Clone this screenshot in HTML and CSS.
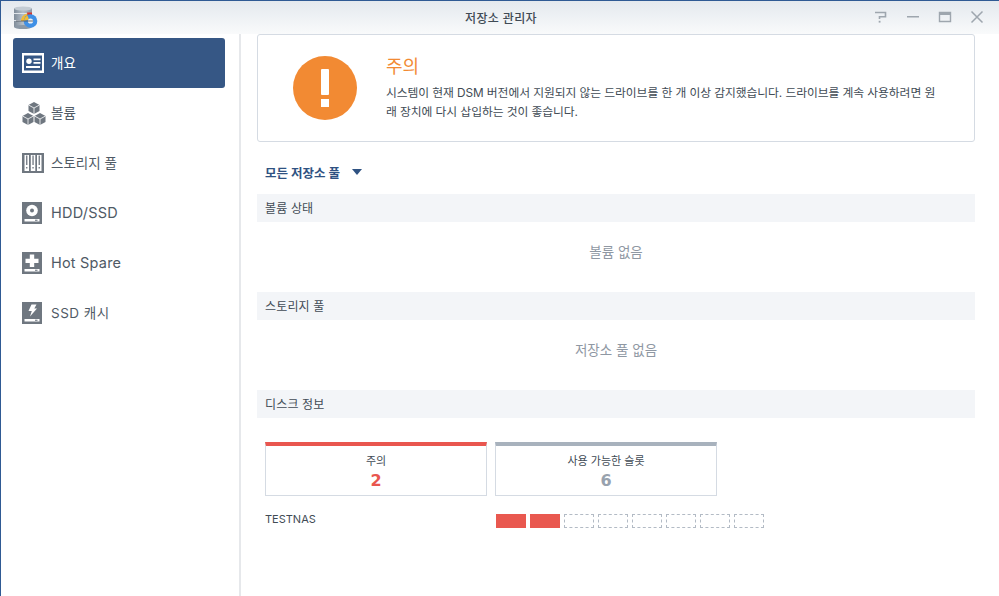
FILE: index.html
```html
<!DOCTYPE html>
<html lang="ko">
<head>
<meta charset="utf-8">
<title>저장소 관리자</title>
<link rel="stylesheet" href="styles.css">
</head>
<body>
<div class="window">
  <header class="titlebar">
    <svg class="app-icon" width="28" height="28" viewBox="0 0 28 28">
      <defs><linearGradient id="cyl" x1="0" x2="1" y1="0" y2="0"><stop offset="0" stop-color="#7f8c99"/><stop offset=".5" stop-color="#b4bec8"/><stop offset="1" stop-color="#8b98a6"/></linearGradient></defs>
      <rect x="1" y="3" width="18" height="19" fill="url(#cyl)"/>
      <ellipse cx="10" cy="3.500" rx="9" ry="2" fill="#c4ccd4"/>
      <ellipse cx="10" cy="22" rx="9" ry="2" fill="#8b98a6"/>
      <path d="M1 8.500h18M1 15.500h18" stroke="#dfe4e9" stroke-width="1"/>
      <path d="M8 16a7.500 7.500 0 0 1 6-7.500l1 7.500z" fill="#f2bb35"/>
      <path d="M14 7.500l5 0 0 5-4 1z" fill="#d7342b"/>
      <circle cx="17.500" cy="16" r="6.800" fill="#3f90e6"/>
      <path d="M11 16a6.500 6.500 0 0 1 3.500-5.500l1.500 4z" fill="#f2bb35"/>
      <circle cx="17.500" cy="16" r="2.600" fill="#eef2f6"/>
      <path d="M3 16h17" stroke="#555c64" stroke-width=".9"/>
    </svg>
    <h1 class="title">저장소 관리자</h1>
    <div class="controls">
      <svg width="14" height="14" viewBox="0 0 14 14"><path d="M1 2.500h10.500v4.200h-6v2.300" fill="none" stroke="#9ea6ae" stroke-width="1.600"/><rect x="4.700" y="10.800" width="1.800" height="1.800" fill="#9ea6ae"/></svg>
      <svg width="14" height="14" viewBox="0 0 14 14"><rect x="1" y="6" width="12" height="1.500" fill="#9ea6ae"/></svg>
      <svg width="14" height="14" viewBox="0 0 14 14"><path d="M1.500 2.500h11v9h-11z" fill="none" stroke="#9ea6ae" stroke-width="1.400"/><rect x="1" y="2" width="12" height="3" fill="#9ea6ae"/></svg>
      <svg width="14" height="14" viewBox="0 0 14 14"><path d="M1.500 1.500l11 11M12.500 1.500l-11 11" stroke="#9ea6ae" stroke-width="1.500"/></svg>
    </div>
  </header>
  <div class="body">
    <nav class="sidebar">
      <a class="nav-item active">
        <svg class="nav-icon" width="22" height="20" viewBox="0 0 22 20"><path fill-rule="evenodd" d="M0 0h22v20H0zM2 2.500v15h18v-15z" fill="#fff"/><circle cx="7" cy="8.200" r="2.700" fill="#fff"/><rect x="4" y="13" width="14" height="2" fill="#fff"/><path d="M11.500 5.500h7v1.800h-7zM11.500 9h7v1.800h-7z" fill="#fff"/></svg>
        <span>개요</span>
      </a>
      <a class="nav-item">
        <svg class="nav-icon" width="24" height="24" viewBox="0 0 24 24"><path d="M12 1l5.500 3v6L12 13l-5.500-3V4z" fill="#6f7780"/><path d="M6 12l5.500 3v6L6 24l-5.500-3v-6z" fill="#6f7780"/><path d="M18 12l5.500 3v6L18 24l-5.500-3v-6z" fill="#6f7780"/><path d="M6.500 4L12 7l5.500-3M12 7v6M.5 15L6 18l5.500-3M6 18v6M12.500 15l5.500 3 5.500-3M18 18v6" fill="none" stroke="#fff" stroke-width=".8"/></svg>
        <span>볼륨</span>
      </a>
      <a class="nav-item">
        <svg class="nav-icon" width="22" height="20" viewBox="0 0 22 20"><rect width="22" height="20" fill="#6f7780"/><path d="M2.500 2h4.500v16H2.500zM8.800 2h4.500v16H8.800zM15 2h4.500v16H15z" fill="#fff"/><path d="M4.100 2.500h1.300v9.500H4.100zM10.400 2.500h1.300v9.500h-1.300zM16.600 2.500h1.300v9.500h-1.300zM4.100 14h1.300v1.500H4.100zM10.400 14h1.300v1.500h-1.300zM16.600 14h1.300v1.500h-1.300z" fill="#6f7780"/></svg>
        <span>스토리지 풀</span>
      </a>
      <a class="nav-item">
        <svg class="nav-icon" width="20" height="22" viewBox="0 0 20 22"><rect width="20" height="22" fill="#6f7780"/><circle cx="10" cy="8.500" r="5.800" fill="#fff"/><circle cx="10" cy="8.500" r="2" fill="#6f7780"/><rect x="2.500" y="17" width="15" height="2.500" fill="#fff"/><rect x="13" y="17.700" width="2.500" height="1.100" fill="#6f7780"/></svg>
        <span class="latin">HDD/SSD</span>
      </a>
      <a class="nav-item">
        <svg class="nav-icon" width="20" height="22" viewBox="0 0 20 22"><rect width="20" height="22" fill="#6f7780"/><path d="M7.800 2.500h4.400v4.300h4.300v4.200h-4.300v4h-4.400v-4H3.500V6.800h4.300z" fill="#fff"/><rect x="2.500" y="17" width="15" height="2.500" fill="#fff"/><rect x="13" y="17.700" width="2.500" height="1.100" fill="#6f7780"/></svg>
        <span class="latin">Hot Spare</span>
      </a>
      <a class="nav-item">
        <svg class="nav-icon" width="20" height="22" viewBox="0 0 20 22"><rect width="20" height="22" fill="#6f7780"/><path d="M9.500 2.500h5l-2.200 4h2.700L8 14.500l1.800-5.500H6.500z" fill="#fff"/><rect x="2.500" y="17" width="15" height="2.500" fill="#fff"/><rect x="13" y="17.700" width="2.500" height="1.100" fill="#6f7780"/></svg>
        <span class="mixed">SSD 캐시</span>
      </a>
    </nav>
    <main class="content">
      <section class="alert">
        <div class="alert-icon"><span class="bang"></span><span class="dot"></span></div>
        <div class="alert-text">
          <h2>주의</h2>
          <p>시스템이 현재 DSM 버전에서 지원되지 않는 드라이브를 한 개 이상 감지했습니다. 드라이브를 계속 사용하려면 원래 장치에 다시 삽입하는 것이 좋습니다.</p>
        </div>
      </section>
      <div class="filter"><span>모든 저장소 풀</span><i class="caret"></i></div>
      <h3 class="section-head">볼륨 상태</h3>
      <p class="empty">볼륨 없음</p>
      <h3 class="section-head">스토리지 풀</h3>
      <p class="empty">저장소 풀 없음</p>
      <h3 class="section-head">디스크 정보</h3>
      <div class="stats">
        <div class="stat warn"><span class="stat-label">주의</span><strong>2</strong></div>
        <div class="stat free"><span class="stat-label">사용 가능한 슬롯</span><strong>6</strong></div>
      </div>
      <div class="device">
        <span class="device-name">TESTNAS</span>
        <div class="slots">
          <i class="slot used"></i><i class="slot used"></i><i class="slot"></i><i class="slot"></i><i class="slot"></i><i class="slot"></i><i class="slot"></i><i class="slot"></i>
        </div>
      </div>
    </main>
  </div>
</div>
</body>
</html>
```
FILE: styles.css
```css
* { box-sizing: border-box; }
html, body { margin: 0; height: 100%; overflow: hidden; }
body {
  background: #fff;
  color: #414b55;
  font-family: Inter, "Noto Sans CJK KR", sans-serif;
  font-size: 12px;
}
.window {
  width: 999px;
  height: 596px;
  border-top: 1px solid #2f5a94;
  border-left: 1px solid #2f5a94;
  display: flex;
  flex-direction: column;
}
.titlebar {
  height: 33px;
  flex: none;
  position: relative;
  display: flex;
  align-items: center;
  justify-content: center;
  background: linear-gradient(#e4e9ee, #f9fafb);
}
.app-icon { position: absolute; left: 12px; top: 4px; }
.title { margin: 0; font-size: 12px; font-weight: 500; letter-spacing: .35px; color: #3f4a55; padding-left: 2px; }
.controls {
  position: absolute;
  right: 15px;
  top: 9px;
  display: flex;
  gap: 18px;
}
.controls svg { display: block; }
.body { flex: 1; display: flex; min-height: 0; }
.sidebar {
  width: 240px;
  flex: none;
  padding: 4px 14px 0 12px;
  border-right: 2px solid #e6e8eb;
}
.nav-item {
  height: 50px;
  display: flex;
  align-items: center;
  padding-left: 9px;
  border-radius: 3px;
  font-size: 13.500px;
  color: #4f5a65;
  position: relative;
}
.nav-item span { position: absolute; left: 38px; top: 15px; line-height: 20px; }
.nav-item .latin { font-size: 14.500px; letter-spacing: .2px; }
.nav-item .mixed { letter-spacing: .5px; }
.nav-item.active { background: #365785; color: #fff; }
.nav-icon { display: block; }
.content { flex: 1; padding: 0 24px 0 16px; min-width: 0; }
.alert {
  height: 108px;
  border: 1px solid #d5dbe3;
  border-radius: 3px;
  display: flex;
  padding: 21px 0 0 35px;
}
.alert-icon {
  width: 64px;
  height: 64px;
  border-radius: 50%;
  background: #f28a33;
  flex: none;
  display: flex;
  flex-direction: column;
  align-items: center;
  padding-top: 13px;
}
.bang { width: 8px; height: 26px; background: #fff; border-radius: 1px; }
.dot { width: 8px; height: 8px; margin-top: 4px; background: #fff; }
.alert-text { margin-left: 29px; width: 552px; margin-top: -1px; }
.alert-text h2 { margin: 0 0 5px; font-size: 18px; line-height: 24px; font-weight: 400; color: #f28a33; }
.alert-text p { margin: 0; font-size: 11.800px; letter-spacing: -.08px; line-height: 19px; color: #414b55; word-break: break-all; }
.filter {
  height: 60px;
  display: flex;
  align-items: center;
  padding-left: 8px;
  margin-bottom: -8px;
  font-size: 12.500px;
  font-weight: 700;
  color: #2f5282;
}
.caret {
  margin-left: 12.500px;
  width: 0;
  height: 0;
  border-left: 5.500px solid transparent;
  border-right: 5.500px solid transparent;
  border-top: 6px solid #2f5282;
}
.section-head {
  margin: 0;
  height: 28px;
  line-height: 30px;
  padding-left: 8px;
  background: #f3f5f8;
  font-size: 12px;
  font-weight: 400;
  letter-spacing: .15px;
  color: #414b55;
}
.empty {
  margin: 0;
  height: 70px;
  padding-top: 19px;
  line-height: 22px;
  text-align: center;
  font-size: 13.500px;
  color: #8f98a3;
}
.stats { display: flex; gap: 8px; padding: 24px 0 0 8px; }
.stat {
  width: 222px;
  height: 54px;
  border: 1px solid #d5dbe3;
  border-top: 4px solid;
  display: flex;
  flex-direction: column;
  align-items: center;
  padding-top: 8px;
}
.stat-label { font-size: 11px; line-height: 14px; color: #414b55; }
.stat strong { font-family: "DejaVu Sans", sans-serif; font-size: 16px; line-height: 26px; font-weight: 700; }
.warn { border-top-color: #e9564f; }
.warn strong { color: #e9564f; }
.free { border-top-color: #a8b2bd; }
.free strong { color: #98a2ae; }
.device { display: flex; align-items: center; padding: 15px 0 0 8px; height: 32px; }
.device-name { width: 231px; font-size: 11px; color: #414b55; margin-bottom: 2px; }
.slots { display: flex; gap: 4px; margin-top: 3px; }
.slot { width: 30px; height: 14px; border: 1px dashed #b3bbc5; display: block; }
.slot.used { background: #e9584f; border: 0; }
```
